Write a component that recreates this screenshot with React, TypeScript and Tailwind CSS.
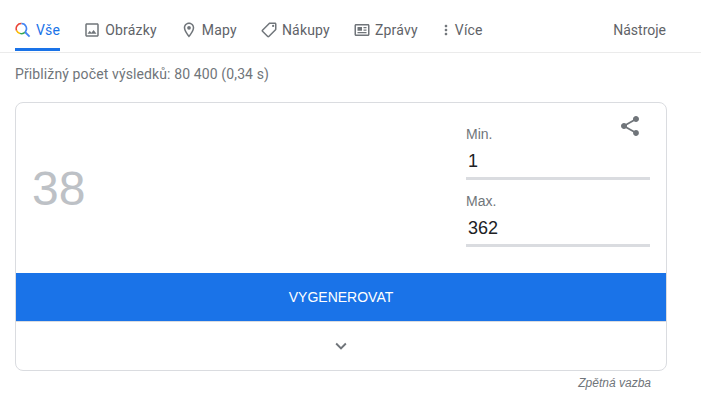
const grey = "fill-[#70757a]";

function ImageIcon() {
  return (
    <svg viewBox="0 0 24 24" className={`w-[18px] h-[18px] ${grey}`}>
      <path d="M19 5v14H5V5h14m0-2H5c-1.1 0-2 .9-2 2v14c0 1.1.9 2 2 2h14c1.1 0 2-.9 2-2V5c0-1.1-.9-2-2-2zm-4.86 8.86l-3 3.87L9 13.14 6 17h12l-3.86-5.14z" />
    </svg>
  );
}

function PinIcon() {
  return (
    <svg viewBox="0 0 24 24" className={`w-[18px] h-[18px] ${grey}`}>
      <path d="M12 2C8.13 2 5 5.13 5 9c0 5.25 7 13 7 13s7-7.75 7-13c0-3.87-3.13-7-7-7zM7 9c0-2.76 2.24-5 5-5s5 2.24 5 5c0 2.88-2.88 7.19-5 9.88C9.92 16.21 7 11.85 7 9z" />
      <circle cx="12" cy="9" r="2.5" />
    </svg>
  );
}

function TagIcon() {
  return (
    <svg viewBox="0 0 24 24" className={`w-[18px] h-[18px] -scale-x-100 ${grey}`}>
      <path d="M21.41 11.58l-9-9C12.05 2.22 11.55 2 11 2H4c-1.1 0-2 .9-2 2v7c0 .55.22 1.05.59 1.42l9 9c.36.36.86.58 1.41.58s1.05-.22 1.41-.59l7-7c.37-.36.59-.86.59-1.41s-.23-1.06-.59-1.42zM13 20.01L4 11V4h7v-.01l9 9-7 7.02z" />
      <circle cx="6.5" cy="6.5" r="1.5" />
    </svg>
  );
}

function NewsIcon() {
  return (
    <svg viewBox="0 0 24 24" className={`w-[18px] h-[18px] ${grey}`}>
      <path d="M20 4H4c-1.1 0-2 .9-2 2v12c0 1.1.9 2 2 2h16c1.1 0 2-.9 2-2V6c0-1.1-.9-2-2-2zm0 14H4V6h16v12z" />
      <path d="M6 8h6v5H6zM14 8h4v1.8h-4zM14 11.2h4V13h-4zM6 14.6h12v1.6H6z" />
    </svg>
  );
}

function DotsIcon() {
  return (
    <svg viewBox="0 0 24 24" className={`w-4 h-4 -mx-[3px] ${grey}`}>
      <path d="M12 8c1.1 0 2-.9 2-2s-.9-2-2-2-2 .9-2 2 .9 2 2 2zm0 2c-1.1 0-2 .9-2 2s.9 2 2 2 2-.9 2-2-.9-2-2-2zm0 6c-1.1 0-2 .9-2 2s.9 2 2 2 2-.9 2-2-.9-2-2-2z" />
    </svg>
  );
}

function SearchIcon() {
  return (
    <svg viewBox="0 0 16 16" className="w-4 h-4 mr-[1px]" fill="none" strokeWidth="1.5">
      <path d="M1.6 8.6A5 5 0 0 1 6.5 1.6" stroke="#ea4335" />
      <path d="M6.5 1.6A5 5 0 0 1 10.2 10" stroke="#4285f4" />
      <path d="M1.6 8.6A5 5 0 0 0 5 11.4" stroke="#fbbc05" />
      <path d="M5 11.4A5 5 0 0 0 10.2 10" stroke="#34a853" />
      <path d="M10 10l4.6 4.6" stroke="#4285f4" strokeWidth="1.8" />
    </svg>
  );
}

function Tab({ icon, label, active }: { icon: React.ReactNode; label: string; active?: boolean }) {
  return (
    <div className={`relative flex items-center h-full gap-1 ${active ? "text-[#1a73e8]" : "text-[#5f6368]"}`}>
      {icon}
      <span>{label}</span>
      {active && <div className="absolute left-0 right-0 bottom-0 h-[3px] bg-[#1a73e8]" />}
    </div>
  );
}

function Field({ label, value }: { label: string; value: string }) {
  return (
    <div className="flex flex-col">
      <span className="text-sm leading-4 text-[#70757a]">{label}</span>
      <span className="mt-[9px] pl-[2px] text-lg leading-5 text-[#202124]">{value}</span>
      <div className="mt-[6px] h-[3px] bg-[#dadce0]" />
    </div>
  );
}

export default function App() {
  return (
    <div className="w-[701px] h-[419px] overflow-hidden bg-white font-['Liberation_Sans',sans-serif]">
      <div className="flex justify-between items-stretch h-[53px] pl-[15px] pr-[35px] pt-[8px] border-b border-[#ebebeb] font-['Roboto',sans-serif] text-sm">
        <div className="flex gap-[23px] pb-[1px] tracking-[0.2px]">
          <Tab active icon={<SearchIcon />} label="Vše" />
          <Tab icon={<ImageIcon />} label="Obrázky" />
          <Tab icon={<PinIcon />} label="Mapy" />
          <Tab icon={<TagIcon />} label="Nákupy" />
          <Tab icon={<NewsIcon />} label="Zprávy" />
          <Tab icon={<DotsIcon />} label="Více" />
        </div>
        <div className="flex items-center pb-[1px] text-[#5f6368]">Nástroje</div>
      </div>

      <div className="pl-[15px] pt-[13px] h-[49px] font-['Roboto',sans-serif] text-sm leading-4 tracking-[0.12px] text-[#70757a]">
        Přibližný počet výsledků: 80 400 (0,34 s)
      </div>

      <div className="relative w-[652px] h-[269px] ml-[15px] rounded-lg border border-[#dadce0] overflow-hidden flex flex-col">
        <div className="flex justify-between h-[170px]">
          <div className="pl-4 pt-[58px] text-5xl leading-[56px] text-[#bdc1c6]">38</div>
          <div className="w-[184px] mr-4 pt-[23px] flex flex-col gap-[13px]">
            <Field label="Min." value="1" />
            <Field label="Max." value="362" />
          </div>
        </div>
        <svg viewBox="0 0 24 24" className="absolute top-[11px] right-[24px] w-6 h-6 fill-[#70757a]">
          <path d="M18 16.08c-.76 0-1.44.3-1.96.77L8.91 12.7c.05-.23.09-.46.09-.7s-.04-.47-.09-.7l7.05-4.11c.54.5 1.25.81 2.04.81 1.66 0 3-1.34 3-3s-1.34-3-3-3-3 1.34-3 3c0 .24.04.47.09.7L8.04 9.81C7.5 9.31 6.79 9 6 9c-1.66 0-3 1.34-3 3s1.34 3 3 3c.79 0 1.5-.31 2.04-.81l7.12 4.16c-.05.21-.08.43-.08.65 0 1.61 1.31 2.92 2.92 2.92s2.92-1.31 2.92-2.92-1.31-2.92-2.92-2.92z" />
        </svg>
        <div className="flex items-center justify-center h-[48px] bg-[#1a73e8] text-sm text-white">VYGENEROVAT</div>
        <div className="flex flex-1 items-center justify-center border-t border-[#dadce0]">
          <svg viewBox="0 0 24 24" className="w-[22px] h-[22px] fill-[#70757a]">
            <path d="M7.41 8.59L12 13.17l4.59-4.58L18 10l-6 6-6-6 1.41-1.41z" />
          </svg>
        </div>
      </div>

      <div className="w-[651px] pt-[5px] text-right text-xs leading-[14px] italic text-[#70757a]">Zpětná vazba</div>
    </div>
  );
}
